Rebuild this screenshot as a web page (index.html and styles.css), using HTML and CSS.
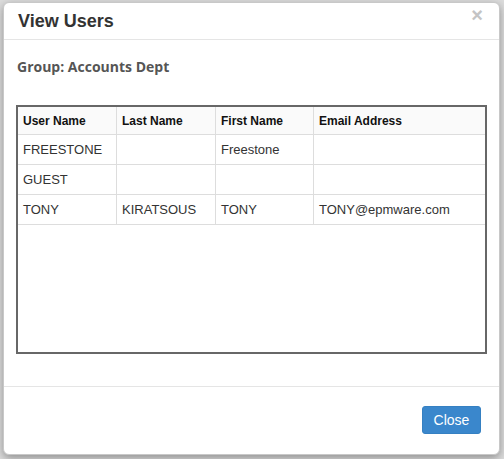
FILE: index.html
```html
<!DOCTYPE html>
<html>
<head>
<meta charset="utf-8">
<link rel="stylesheet" href="styles.css">
</head>
<body>
<div class="backdrop">
  <div class="modal">
    <div class="modal-header">
      <h4 class="modal-title">View Users</h4>
      <span class="close">&times;</span>
    </div>
    <div class="modal-body">
      <div class="group">Group: Accounts Dept</div>
      <div class="grid-box">
        <table class="users">
          <thead>
            <tr><th class="c1">User Name</th><th class="c2">Last Name</th><th class="c3">First Name</th><th>Email Address</th></tr>
          </thead>
          <tbody>
            <tr><td>FREESTONE</td><td></td><td>Freestone</td><td></td></tr>
            <tr><td>GUEST</td><td></td><td></td><td></td></tr>
            <tr><td>TONY</td><td>KIRATSOUS</td><td>TONY</td><td>TONY@epmware.com</td></tr>
          </tbody>
        </table>
      </div>
    </div>
    <div class="modal-footer">
      <button class="btn">Close</button>
    </div>
  </div>
</div>
</body>
</html>
```
FILE: styles.css
```css
html, body {
  margin: 0;
  padding: 0;
}
body {
  width: 504px;
  height: 459px;
  background: #dcdcdc;
  font-family: "Liberation Sans", Arial, sans-serif;
  overflow: hidden;
}
.backdrop {
  padding: 2px 4px 4px 3px;
}
.modal {
  width: 495px;
  height: 451px;
  background: #fff;
  border: 1px solid #c8c8c8;
  border-radius: 6px;
  box-shadow: 0 3px 8px rgba(0,0,0,0.35);
  display: flex;
  flex-direction: column;
  position: relative;
}
.modal-header {
  height: 36px;
  border-bottom: 1px solid #e5e5e5;
  display: flex;
  align-items: center;
  justify-content: space-between;
  padding: 0 15px 0 14px;
}
.modal-title {
  margin: 0;
  font-size: 18px;
  font-weight: bold;
  color: #333;
  line-height: 20px;
}
.close {
  font-size: 20px;
  font-weight: bold;
  color: #c4c4c4;
  line-height: 20px;
  margin-top: -12px;
  margin-right: 1px;
}
.modal-body {
  padding: 0 12px 0 12px;
  flex: 1;
}
.group {
  font-family: "Open Sans", sans-serif;
  font-weight: bold;
  font-size: 14px;
  color: #555;
  line-height: 20px;
  margin: 17px 0 0 1px;
}
.grid-box {
  margin-top: 28px;
  width: 467px;
  height: 245px;
  border: 2px solid #676767;
  background: #fff;
}
.users {
  border-collapse: collapse;
  width: 100%;
  font-size: 13px;
  color: #333;
}
.users th, .users td {
  border-right: 1px solid #ddd;
  border-bottom: 1px solid #ddd;
  text-align: left;
  padding: 0 5px;
}
.users th:last-child, .users td:last-child {
  border-right: none;
}
.users th {
  background: #fafafa;
  font-size: 12px;
  font-weight: bold;
  color: #111;
  height: 27px;
  border-bottom: 1px solid #ddd;
}
.users td {
  height: 29px;
}
.users .c1 { width: 88px; }
.users .c2 { width: 88px; }
.users .c3 { width: 87px; }
.modal-footer {
  height: 68px;
  border-top: 1px solid #e5e5e5;
  display: flex;
  justify-content: flex-end;
  align-items: flex-start;
  padding: 19px 18px 0 0;
  box-sizing: border-box;
}
.btn {
  width: 59px;
  height: 28px;
  background: #3a87cc;
  border: 1px solid #3580c2;
  border-radius: 3px;
  color: #fff;
  font-family: "Liberation Sans", Arial, sans-serif;
  font-size: 14px;
  padding: 0;
}
```
